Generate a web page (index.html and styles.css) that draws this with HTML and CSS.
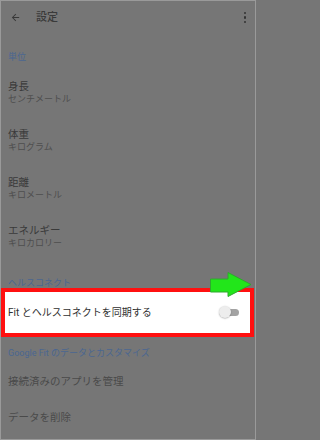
FILE: index.html
```html
<!DOCTYPE html>
<html lang="ja">
<head>
<meta charset="utf-8">
<link rel="stylesheet" href="styles.css">
</head>
<body>
<div class="screen">
  <div class="appbar">
    <svg class="back" viewBox="0 0 24 24" width="11" height="11"><path d="M20 11H7.83l5.59-5.59L12 4l-8 8 8 8 1.41-1.41L7.83 13H20v-2z" fill="#383838"/></svg>
    <span class="title">設定</span>
    <span class="dots"><i></i><i></i><i></i></span>
  </div>
  <div class="subheader first">単位</div>
  <div class="item two"><div class="t">身長</div><div class="s">センチメートル</div></div>
  <div class="item two"><div class="t">体重</div><div class="s">キログラム</div></div>
  <div class="item two"><div class="t">距離</div><div class="s">キロメートル</div></div>
  <div class="item two"><div class="t">エネルギー</div><div class="s">キロカロリー</div></div>
  <div class="subheader hc">ヘルスコネクト</div>
  <div class="highlight">
    <span class="hl-text">Fit とヘルスコネクトを同期する</span>
    <span class="switch"><span class="track"></span><span class="thumb"></span></span>
  </div>
  <div class="subheader gf">Google Fit のデータとカスタマイズ</div>
  <div class="item one">接続済みのアプリを管理</div>
  <div class="item one">データを削除</div>
  <svg class="arrow" viewBox="0 0 42 25" width="42" height="25"><polygon points="0.5,7 18,7 18,0.5 41,12.5 18,24.5 18,20 0.5,20" fill="#22e61a" stroke="#2fa82f" stroke-width="1"/></svg>
</div>
</body>
</html>
```

FILE: styles.css
```css
* { box-sizing: border-box; }
html, body { margin: 0; padding: 0; }
body { background: #767676; }
.screen {
  position: relative;
  width: 256px;
  height: 440px;
  overflow: hidden;
  background: #767676;
  border: 1px solid #9a9a9a;
  font-family: Roboto, "Noto Sans CJK JP", sans-serif;
  color: #3a3a3a;
}
.appbar {
  height: 33px;
  display: flex;
  align-items: center;
  padding: 0 0 0 9px;
}
.back { display: block; }
.title {
  margin-left: 15px;
  font-size: 11px;
  font-weight: 500;
  color: #3a3a3a;
  line-height: 14px;
}
.dots {
  margin-left: auto;
  margin-right: 9px;
  display: flex;
  flex-direction: column;
  gap: 2px;
}
.dots i {
  display: block;
  width: 2.5px;
  height: 2.5px;
  border-radius: 50%;
  background: #333;
}
.subheader {
  padding: 0 7px;
  font-size: 9px;
  line-height: 12px;
  color: #4a6691;
}
.subheader.first { padding-top: 17px; padding-bottom: 6px; }
.subheader.hc { padding-top: 16px; height: 27px; }
.subheader.gf { padding-top: 10px; padding-bottom: 5px; }
.item {
  padding: 0 7px;
  display: flex;
  flex-direction: column;
  justify-content: center;
}
.item.two { height: 48px; }
.item .t { font-size: 10.5px; line-height: 12px; color: #3a3a3a; }
.item .s { font-size: 9px; line-height: 12px; color: #4e4e4e; }
.item.one { height: 36px; font-size: 10.5px; line-height: 12px; color: #4a4a4a; }
.highlight {
  position: relative;
  z-index: 1;
  height: 49px;
  margin-right: 1px;
  border: 4px solid #ff1010;
  background: #ffffff;
  display: flex;
  align-items: center;
  padding: 0 10px 0 3px;
}
.hl-text { font-size: 10px; color: #303030; line-height: 12px; }
.switch {
  margin-left: auto;
  position: relative;
  width: 21px;
  height: 13px;
}
.track {
  position: absolute;
  left: 3px;
  top: 3px;
  width: 17px;
  height: 7px;
  border-radius: 4px;
  background: #a3a3a3;
}
.thumb {
  position: absolute;
  left: 0;
  top: 0;
  width: 12px;
  height: 12px;
  border-radius: 50%;
  background: #ededed;
  box-shadow: 0 0.5px 1.5px rgba(0,0,0,0.35);
}
.arrow {
  position: absolute;
  left: 209px;
  top: 271px;
  z-index: 2;
}
```
